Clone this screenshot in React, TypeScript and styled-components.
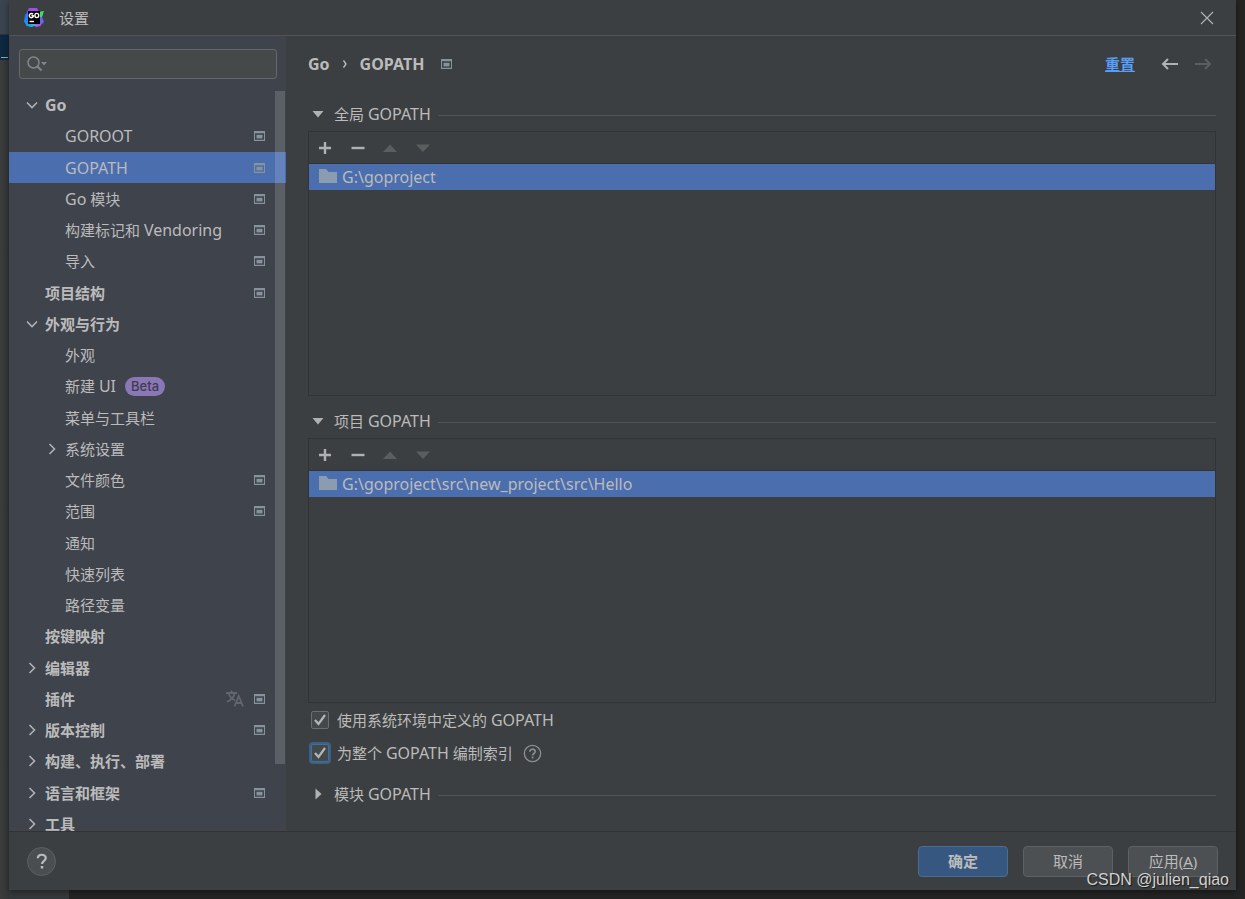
import React, { useState } from "react";
import styled, { createGlobalStyle, css } from "styled-components";

const color = {
  panel: "#3c3f41",
  sidebar: "#3f434c",
  text: "#bbbbbb",
  selected: "#4b6eaf",
  line: "#515456",
  dark: "#323334",
  icon: "#afb1b3",
  muted: "#87939a",
  disabled: "#5b5d5f",
};

const GlobalStyle = createGlobalStyle`
  *, *::before, *::after { box-sizing: border-box; }
  body {
    margin: 0;
    background: #242424;
    color: ${color.text};
    font: 15px/20px "Noto Sans", "Noto Sans CJK SC", sans-serif;
  }
  button, input { font: inherit; color: inherit; }
  ul { list-style: none; margin: 0; padding: 0; }
  svg { display: block; flex: none; }
`;

/* Desktop behind the dialog */
const Desktop = styled.div`
  display: grid;
  grid-template-columns: 9px minmax(0, 1fr) 9px;
  grid-template-rows: minmax(0, 1fr) 9px;
  height: 100vh;
  min-height: 600px;
  overflow: hidden;
`;

const EditorEdge = styled.div`
  grid-row: 1 / 3;
  background: linear-gradient(to right, #3b3c3c, #343637);
`;

const EditorTab = styled.div`
  height: 35px;
  background: #394450;
  border-bottom: 1px solid #2b3238;
`;

const EditorActive = styled.div`
  height: 25px;
  padding: 22px 1px 0 1px;
  background: #0c2940;

  &::after {
    content: "";
    display: block;
    height: 1px;
    background: #9aa3a8;
  }
`;

const StatusEdge = styled.div`
  grid-column: 2;
  grid-row: 2;
  width: 60px;
  background: #36393b;
`;

const Dialog = styled.main`
  position: relative;
  grid-column: 2;
  grid-row: 1;
  display: flex;
  flex-direction: column;
  min-height: 0;
  background: ${color.panel};
  box-shadow: 0 2px 6px rgba(0, 0, 0, 0.4);
`;

const TitleBar = styled.header`
  display: flex;
  align-items: center;
  gap: 15px;
  flex: none;
  height: 36px;
  padding: 0 22px 0 15px;
  border-bottom: 1px solid ${color.line};
`;

const DialogTitle = styled.h1`
  flex: 1;
  margin: 0;
  font-size: 15px;
  font-weight: 400;
`;

const IconButton = styled.button<{ $size?: number }>`
  display: grid;
  place-items: center;
  width: ${(p) => p.$size ?? 16}px;
  height: ${(p) => p.$size ?? 16}px;
  padding: 0;
  border: 0;
  background: none;
  color: ${color.icon};

  &:disabled { color: ${color.disabled}; }
`;

/* Latin runs are set one size larger than the Chinese text around them */
const LatinRun = styled.span`
  font-size: 16px;
`;

const Text = ({ children }: { children: string }) => (
  <span>
    {children
      .split(/([\x21-\x7e]+)/)
      .filter(Boolean)
      .map((part, i) => (/[\x21-\x7e]/.test(part) ? <LatinRun key={i}>{part}</LatinRun> : part))}
  </span>
);

const Body = styled.div`
  display: flex;
  flex: 1;
  min-height: 0;
`;

/* Sidebar */
const Sidebar = styled.nav`
  display: flex;
  flex-direction: column;
  flex: none;
  width: 277px;
  background: ${color.sidebar};
`;

const SearchBox = styled.label`
  display: flex;
  align-items: center;
  gap: 4px;
  flex: none;
  height: 30px;
  margin: 13px 9px 10px 10px;
  padding: 0 8px 0 7px;
  border: 1px solid #646869;
  border-radius: 3px;
  background: #45494a;
`;

const SearchInput = styled.input`
  flex: 1;
  min-width: 0;
  padding: 0;
  border: 0;
  outline: 0;
  background: none;
`;

const TreeView = styled.div`
  position: relative;
  flex: 1;
  min-height: 0;
  overflow: hidden;
`;

const ScrollThumb = styled.div`
  position: absolute;
  top: 2px;
  right: 1px;
  bottom: 9%;
  width: 10px;
  background: rgba(255, 255, 255, 0.15);
`;

const TreeItem = styled.li`
  height: 31px;

  &:nth-child(4n + 2) { height: 32px; }
`;

const TreeLink = styled.a<{ $depth: number; $bold?: boolean; $selected?: boolean }>`
  display: flex;
  align-items: center;
  height: 100%;
  padding: 0 21px 0 ${(p) => 15 + p.$depth * 20}px;
  color: inherit;
  text-decoration: none;
  font-weight: ${(p) => (p.$bold ? 700 : 400)};
  ${(p) => p.$selected && css`background: ${color.selected};`}
`;

const ChevronSlot = styled.span`
  display: grid;
  place-items: center;
  width: 16px;
  margin-right: 5px;
`;

const TreeIcons = styled.span`
  display: flex;
  align-items: center;
  gap: 10px;
  margin-left: auto;
`;

const Badge = styled.span`
  height: 19px;
  margin-left: 9px;
  padding: 0 6px;
  border-radius: 10px;
  background: #8a78b4;
  color: #3f3b52;
  font: 500 13px/19px Inter, sans-serif;
`;

/* Content */
const Content = styled.section`
  display: flex;
  flex-direction: column;
  flex: 1;
  min-width: 0;
  padding: 17px 20px 27px 22px;
`;

const ContentHeader = styled.div`
  display: flex;
  align-items: center;
  height: 21px;
  margin-bottom: 30px;
  padding-right: 4px;
`;

const Breadcrumb = styled.h2`
  display: flex;
  align-items: center;
  gap: 13px;
  flex: 1;
  margin: 0;
  font-size: 15px;
  font-weight: 700;
`;

const BreadcrumbMark = styled.span`
  margin-left: 4px;
`;

const ResetLink = styled.a`
  margin-right: 26px;
  color: #589df6;
  font-weight: 700;
  text-decoration: underline;
`;

const HistoryButtons = styled.div`
  display: flex;
  gap: 17px;
`;

const Group = styled.section<{ $open?: boolean }>`
  display: flex;
  flex-direction: column;
  min-height: 0;
  ${(p) => p.$open && css`flex: 1 1 0;`}

  & + & { margin-top: 15px; }
`;

const GroupTitle = styled.h3`
  display: flex;
  align-items: center;
  flex: none;
  height: 20px;
  margin: 0;
  font-size: 15px;
  font-weight: 400;

  &::after {
    content: "";
    flex: 1;
    height: 1px;
    margin: 2px 0 0 7px;
    background: ${color.line};
  }
`;

const GroupToggle = styled.button`
  display: flex;
  align-items: center;
  gap: 8px;
  padding: 0 0 0 2px;
  border: 0;
  background: none;
`;

const ListPanel = styled.div`
  flex: 1;
  min-height: 0;
  margin-top: 7px;
  border: 1px solid ${color.dark};
`;

const Toolbar = styled.div`
  display: flex;
  align-items: center;
  gap: 17px;
  height: 32px;
  padding-left: 8px;
  border-bottom: 1px solid ${color.dark};
`;

const PathItem = styled.li`
  display: flex;
  align-items: center;
  gap: 5px;
  height: 26px;
  padding-left: 10px;
  background: ${color.selected};
`;

const Options = styled.div`
  display: flex;
  flex-direction: column;
  gap: 13px;
  flex: none;
  margin: 7px 0 21px 3px;
`;

const OptionRow = styled.div`
  display: flex;
  align-items: center;
  gap: 10px;
`;

const OptionLabel = styled.label`
  display: flex;
  align-items: center;
  gap: 8px;
`;

const CheckBoxFrame = styled.span`
  display: grid;
  place-items: center;

  & > * { grid-area: 1 / 1; }
  & > svg { pointer-events: none; }
`;

const CheckInput = styled.input<{ $focused?: boolean }>`
  appearance: none;
  width: 18px;
  height: 18px;
  margin: 0;
  border: 1px solid #6b6e6f;
  border-radius: 2px;
  background: #43494a;
  ${(p) =>
    p.$focused &&
    css`
      border-color: #436f9c;
      box-shadow: 0 0 0 2px #3d6185;
      outline: 0;
    `}

  &:not(:checked) + svg { visibility: hidden; }
`;

/* Footer */
const Footer = styled.footer`
  display: flex;
  align-items: center;
  gap: 15px;
  flex: none;
  height: 59px;
  padding: 0 18px;
  border-top: 1px solid ${color.dark};
`;

const HelpButton = styled.button`
  display: grid;
  place-items: center;
  width: 29px;
  height: 29px;
  margin-right: auto;
  padding: 0;
  border: 1px solid #5e6162;
  border-radius: 50%;
  background: #4a4e50;
`;

const DialogButton = styled.button<{ $primary?: boolean }>`
  width: 90px;
  height: 31px;
  padding: 0;
  border: 1px solid ${(p) => (p.$primary ? "#4a6c8f" : "#5e6162")};
  border-radius: 4px;
  background: ${(p) => (p.$primary ? "#365880" : "#4c5052")};
  font-weight: ${(p) => (p.$primary ? 700 : 400)};
`;

const Watermark = styled.span`
  position: absolute;
  right: 7px;
  bottom: 0;
  color: #d2d2d2;
  font: 16px/20px "Liberation Sans", sans-serif;
  text-shadow: 1px 1px 1px #1a1a1a;
  pointer-events: none;
`;

/* Icons */
const GoLandLogo = () => (
  <svg width="20" height="20" viewBox="0 0 20 20">
    <defs>
      <linearGradient id="logo-left" x1="0" y1="0" x2="0" y2="1">
        <stop offset="0" stopColor="#6a55f8" />
        <stop offset="0.4" stopColor="#1f7df5" />
        <stop offset="1" stopColor="#12a0f0" />
      </linearGradient>
      <linearGradient id="logo-bottom" x1="0" y1="0" x2="1" y2="0">
        <stop offset="0" stopColor="#158df2" />
        <stop offset="0.5" stopColor="#2fb8d8" />
        <stop offset="0.7" stopColor="#a060f5" />
        <stop offset="1" stopColor="#b64cf5" />
      </linearGradient>
    </defs>
    <path d="M5 0h8l2 4H3z" fill="#a348f7" />
    <path d="M4 3L1 7 0 14l4 3V3z" fill="url(#logo-left)" />
    <path d="M1 15h17l-1.500 3-4 1-2-1-3 1-5-1z" fill="url(#logo-bottom)" />
    <path d="M15 5h4l-1 4 2 5-2 2h-3z" fill="#6a62f5" />
    <path d="M14 4l6-1-2 6h-3z" fill="#3be05f" />
    <path d="M4 3h12v13H4z" fill="#000" />
    <path d="M9 6.300A2.100 2.100 0 1 0 9.200 8.600V7.800H7.400" fill="none" stroke="#fff" strokeWidth="1.400" />
    <ellipse cx="12.800" cy="7.500" rx="1.900" ry="2.100" fill="none" stroke="#fff" strokeWidth="1.400" />
    <path d="M5.500 13.500h4.500" stroke="#fff" strokeWidth="1.400" />
  </svg>
);

const CloseIcon = () => (
  <svg width="14" height="14" viewBox="0 0 14 14" stroke="currentColor" strokeWidth="1.200">
    <path d="M1 1l12 12M13 1L1 13" />
  </svg>
);

const SearchIcon = () => (
  <svg width="21" height="16" viewBox="0 0 21 16" fill="none" stroke="#80878b" strokeWidth="1.500">
    <circle cx="6.500" cy="6.500" r="5.500" />
    <path d="M10.500 10.500l4 4" strokeWidth="2" />
    <path d="M14 6h6l-3 3.500z" fill="#80878b" stroke="none" />
  </svg>
);

const Chevron = ({ open }: { open: boolean }) =>
  open ? (
    <svg width="12" height="8" viewBox="0 0 12 8" fill="none" stroke={color.icon} strokeWidth="1.600">
      <path d="M1 1.500l5 5 5-5" />
    </svg>
  ) : (
    <svg width="8" height="12" viewBox="0 0 8 12" fill="none" stroke={color.icon} strokeWidth="1.600">
      <path d="M1.500 1l5 5-5 5" />
    </svg>
  );

const ProjectIcon = () => (
  <svg width="11" height="10" viewBox="0 0 11 10" fill={color.muted}>
    <path fillRule="evenodd" d="M0 0h11v10H0zM1 2.200v6.600h9V2.200z" />
    <path d="M2.500 3.800h6v3.600h-6z" />
  </svg>
);

const TranslateIcon = () => (
  <svg width="18" height="17" viewBox="0 0 18 17" fill="none" stroke="#61666f" strokeWidth="1.800">
    <path d="M0 3h11M5.500 0.500V3M2.500 3c1 3.500 3.500 6 6.500 7.500M8.800 3C8 7 5 10 1 12" />
    <path d="M8.500 16.500L12.700 6l4.300 10.500M10 13h5.500" strokeWidth="1.800" />
  </svg>
);

const Triangle = ({ open }: { open: boolean }) => (
  <svg width="16" height="16" viewBox="0 0 16 16" fill={color.icon}>
    <path d={open ? "M2.500 5h11L8 11.500z" : "M5.500 2.500v11l6-5.500z"} />
  </svg>
);

const ToolIcon = ({ path }: { path: string }) => (
  <svg width="16" height="16" viewBox="0 0 16 16" fill="currentColor">
    <path d={path} />
  </svg>
);

const FolderIcon = () => (
  <svg width="18" height="18" viewBox="0 0 18 18" fill="#8b9cb0">
    <path d="M0 1h7l2.500 3H18v11H0z" />
  </svg>
);

const CheckIcon = () => (
  <svg width="14" height="14" viewBox="0 0 14 14" fill="none" stroke="#b4b5b6" strokeWidth="2.200">
    <path d="M2 7l3.500 4L12 2" />
  </svg>
);

const ArrowIcon = ({ flip }: { flip?: boolean }) => (
  <svg width="17" height="14" viewBox="0 0 17 14" fill="none" stroke="currentColor" strokeWidth="2">
    <path d={flip ? "M0 7h15M10 2l5 5-5 5" : "M17 7H2M7 2L2 7l5 5"} />
  </svg>
);

const BreadcrumbArrow = () => (
  <svg width="4" height="8" viewBox="0 0 4 8" fill="none" stroke={color.text} strokeWidth="1.400">
    <path d="M0.500 0.500L3 4 0.500 7.500" />
  </svg>
);

const QuestionIcon = ({ ring }: { ring?: boolean }) => (
  <svg width="19" height="19" viewBox="0 0 19 19" fill="none" stroke={ring ? "#8a9094" : "currentColor"}>
    {ring && <circle cx="9.500" cy="9.500" r="8.200" strokeWidth="1.300" />}
    {ring ? (
      <>
        <path d="M6.800 7.800c0-3.500 5.400-3.400 5.400-0.300 0 2-2.600 2-2.600 4" strokeWidth="1.600" />
        <path d="M9.600 12.600v1.800" strokeWidth="1.800" />
      </>
    ) : (
      <>
        <path d="M5.800 6.300c0-4.800 8-4.600 8-0.300 0 2.800-3.800 2.800-3.800 6" strokeWidth="2.200" />
        <path d="M10 14v2.500" strokeWidth="2.500" />
      </>
    )}
  </svg>
);

type Node = {
  label: string;
  depth?: number;
  bold?: boolean;
  open?: boolean;
  project?: boolean;
  translate?: boolean;
  badge?: string;
};

const nodes: Node[] = [
  { label: "Go", bold: true, open: true },
  { label: "GOROOT", depth: 1, project: true },
  { label: "GOPATH", depth: 1, project: true },
  { label: "Go 模块", depth: 1, project: true },
  { label: "构建标记和 Vendoring", depth: 1, project: true },
  { label: "导入", depth: 1, project: true },
  { label: "项目结构", bold: true, project: true },
  { label: "外观与行为", bold: true, open: true },
  { label: "外观", depth: 1 },
  { label: "新建 UI", depth: 1, badge: "Beta" },
  { label: "菜单与工具栏", depth: 1 },
  { label: "系统设置", depth: 1, open: false },
  { label: "文件颜色", depth: 1, project: true },
  { label: "范围", depth: 1, project: true },
  { label: "通知", depth: 1 },
  { label: "快速列表", depth: 1 },
  { label: "路径变量", depth: 1 },
  { label: "按键映射", bold: true },
  { label: "编辑器", bold: true, open: false },
  { label: "插件", bold: true, project: true, translate: true },
  { label: "版本控制", bold: true, open: false, project: true },
  { label: "构建、执行、部署", bold: true, open: false },
  { label: "语言和框架", bold: true, open: false, project: true },
  { label: "工具", bold: true, open: false },
];

const tools = [
  { label: "添加", path: "M6.800 2h2.400v4.800H14v2.400H9.200V14H6.800V9.200H2V6.800h4.800z" },
  { label: "移除", path: "M1.500 6.800h13v2.400h-13z" },
  { label: "上移", path: "M0 12L7 4.500 14 12z", disabled: true },
  { label: "下移", path: "M0 4.500h14L7 12z", disabled: true },
];

const PathGroup = ({ title, path }: { title: string; path: string }) => (
  <Group $open>
    <GroupTitle>
      <GroupToggle aria-expanded="true">
        <Triangle open />
        <Text>{title}</Text>
      </GroupToggle>
    </GroupTitle>
    <ListPanel>
      <Toolbar>
        {tools.map((t) => (
          <IconButton key={t.label} aria-label={t.label} disabled={t.disabled}>
            <ToolIcon path={t.path} />
          </IconButton>
        ))}
      </Toolbar>
      <ul>
        <PathItem>
          <FolderIcon />
          <Text>{path}</Text>
        </PathItem>
      </ul>
    </ListPanel>
  </Group>
);

const Option = ({ label, focused, help }: { label: string; focused?: boolean; help?: boolean }) => {
  const [checked, setChecked] = useState(true);
  return (
    <OptionRow>
      <OptionLabel>
        <CheckBoxFrame>
          <CheckInput
            type="checkbox"
            $focused={focused}
            checked={checked}
            onChange={(e) => setChecked(e.target.checked)}
          />
          <CheckIcon />
        </CheckBoxFrame>
        <Text>{label}</Text>
      </OptionLabel>
      {help && (
        <IconButton $size={19} aria-label="帮助">
          <QuestionIcon ring />
        </IconButton>
      )}
    </OptionRow>
  );
};

export default function App() {
  const [selected, setSelected] = useState("GOPATH");
  return (
    <>
      <GlobalStyle />
      <Desktop>
        <EditorEdge>
          <EditorTab />
          <EditorActive />
        </EditorEdge>
        <Dialog>
          <TitleBar>
            <GoLandLogo />
            <DialogTitle>设置</DialogTitle>
            <IconButton $size={14} aria-label="关闭">
              <CloseIcon />
            </IconButton>
          </TitleBar>
          <Body>
            <Sidebar>
              <SearchBox>
                <SearchIcon />
                <SearchInput type="text" aria-label="搜索" />
              </SearchBox>
              <TreeView>
                <ul>
                  {nodes.map((n) => (
                    <TreeItem key={n.label}>
                      <TreeLink
                        href="#"
                        $depth={n.depth ?? 0}
                        $bold={n.bold}
                        $selected={n.label === selected}
                        onClick={(e) => {
                          e.preventDefault();
                          setSelected(n.label);
                        }}
                      >
                        <ChevronSlot>{n.open !== undefined && <Chevron open={n.open} />}</ChevronSlot>
                        <Text>{n.label}</Text>
                        {n.badge && <Badge>{n.badge}</Badge>}
                        <TreeIcons>
                          {n.translate && <TranslateIcon />}
                          {n.project && <ProjectIcon />}
                        </TreeIcons>
                      </TreeLink>
                    </TreeItem>
                  ))}
                </ul>
                <ScrollThumb />
              </TreeView>
            </Sidebar>
            <Content>
              <ContentHeader>
                <Breadcrumb>
                  <Text>Go</Text>
                  <BreadcrumbArrow />
                  <Text>GOPATH</Text>
                  <BreadcrumbMark>
                    <ProjectIcon />
                  </BreadcrumbMark>
                </Breadcrumb>
                <ResetLink href="#">重置</ResetLink>
                <HistoryButtons>
                  <IconButton $size={17} aria-label="后退">
                    <ArrowIcon />
                  </IconButton>
                  <IconButton $size={17} aria-label="前进" disabled>
                    <ArrowIcon flip />
                  </IconButton>
                </HistoryButtons>
              </ContentHeader>
              <PathGroup title="全局 GOPATH" path="G:\goproject" />
              <PathGroup title="项目 GOPATH" path="G:\goproject\src\new_project\src\Hello" />
              <Options>
                <Option label="使用系统环境中定义的 GOPATH" />
                <Option label="为整个 GOPATH 编制索引" focused help />
              </Options>
              <Group>
                <GroupTitle>
                  <GroupToggle aria-expanded="false">
                    <Triangle open={false} />
                    <Text>模块 GOPATH</Text>
                  </GroupToggle>
                </GroupTitle>
              </Group>
            </Content>
          </Body>
          <Footer>
            <HelpButton aria-label="帮助">
              <QuestionIcon />
            </HelpButton>
            <DialogButton $primary>确定</DialogButton>
            <DialogButton>取消</DialogButton>
            <DialogButton>
              应用(<u>A</u>)
            </DialogButton>
          </Footer>
          <Watermark>CSDN @julien_qiao</Watermark>
        </Dialog>
        <StatusEdge />
      </Desktop>
    </>
  );
}
